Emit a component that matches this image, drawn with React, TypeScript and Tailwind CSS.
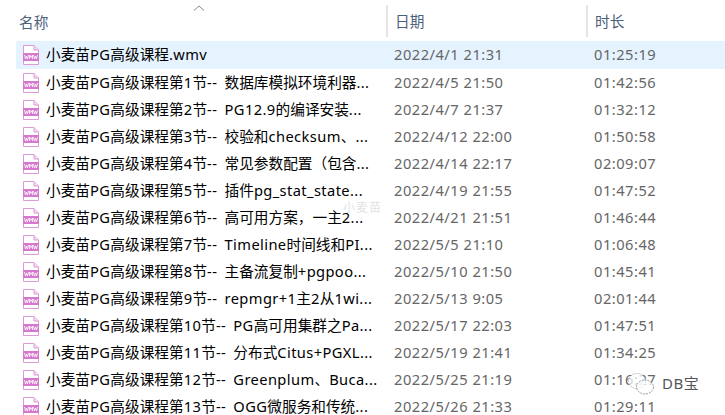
import React from 'react';

const files = [
  { name: '小麦苗PG高级课程.wmv', date: '2022/4/1 21:31', time: '01:25:19' },
  { name: '小麦苗PG高级课程第1节-- 数据库模拟环境利器...', date: '2022/4/5 21:50', time: '01:42:56' },
  { name: '小麦苗PG高级课程第2节-- PG12.9的编译安装...', date: '2022/4/7 21:37', time: '01:32:12' },
  { name: '小麦苗PG高级课程第3节-- 校验和checksum、...', date: '2022/4/12 22:00', time: '01:50:58' },
  { name: '小麦苗PG高级课程第4节-- 常见参数配置（包含...', date: '2022/4/14 22:17', time: '02:09:07' },
  { name: '小麦苗PG高级课程第5节-- 插件pg_stat_state...', date: '2022/4/19 21:55', time: '01:47:52' },
  { name: '小麦苗PG高级课程第6节-- 高可用方案，一主2...', date: '2022/4/21 21:51', time: '01:46:44' },
  { name: '小麦苗PG高级课程第7节-- Timeline时间线和PI...', date: '2022/5/5 21:10', time: '01:06:48' },
  { name: '小麦苗PG高级课程第8节-- 主备流复制+pgpoo...', date: '2022/5/10 21:50', time: '01:45:41' },
  { name: '小麦苗PG高级课程第9节-- repmgr+1主2从1wi...', date: '2022/5/13 9:05', time: '02:01:44' },
  { name: '小麦苗PG高级课程第10节-- PG高可用集群之Pa...', date: '2022/5/17 22:03', time: '01:47:51' },
  { name: '小麦苗PG高级课程第11节-- 分布式Citus+PGXL...', date: '2022/5/19 21:41', time: '01:34:25' },
  { name: '小麦苗PG高级课程第12节-- Greenplum、Buca...', date: '2022/5/25 21:19', time: '01:16:27' },
  { name: '小麦苗PG高级课程第13节-- OGG微服务和传统...', date: '2022/5/26 21:33', time: '01:29:11' },
];

// latin runs sit wider than the CJK ones in the reference
function MixedText({ text }: { text: string }) {
  const parts = text.match(/[\x20-\x7e]+|[^\x20-\x7e]+/g) ?? [];
  return (
    <span className="whitespace-pre [word-spacing:3px]">
      {parts.map((part, i) =>
        /^[\x20-\x7e]/.test(part) ? (
          <span key={i} className="tracking-[0.4px]">{part}</span>
        ) : (
          <span key={i}>{part}</span>
        )
      )}
    </span>
  );
}

function WmvIcon() {
  return (
    <svg width="18" height="20" viewBox="0 0 18 20" className="shrink-0">
      <path d="M1.500 .5H12L16.500 5V19.500H1.500Z" fill="#fff" stroke="#dc9ad6" />
      <path d="M12 .5V5H16.500" fill="#f3dcf1" stroke="#dc9ad6" />
      <rect x="1" y="8" width="16" height="8" fill="#d678ce" />
      <path d="M2.500 10l1 4 1-3 1 3 1-4M7.500 14v-4l1.500 2.500 1.500-2.500v4M11.500 10l1 4 1-3 1 3 1-4" fill="none" stroke="#fff" strokeWidth=".8" />
    </svg>
  );
}

export default function App() {
  return (
    <div className="relative h-[415px] w-[725px] overflow-hidden bg-white font-['Noto_Sans','Noto_Sans_CJK_SC',sans-serif] text-[14.67px]">
      <div className="relative flex h-[37px] pl-[19px] text-[#4c607a]">
        <svg width="12" height="6" viewBox="0 0 12 6" className="absolute left-[193px] top-[5px]">
          <path d="M1 5.500 6 1l5 4.500" fill="none" stroke="#8a8a8a" />
        </svg>
        <div className="flex h-[37px] w-[367px] items-center pt-[6px]">名称</div>
        <div className="flex h-[32px] w-[200px] items-center self-end border-l-2 border-[#e5e5e5] pl-[7px]">日期</div>
        <div className="flex h-[32px] items-center self-end border-l-2 border-[#e5e5e5] pl-[7px]">时长</div>
      </div>
      <div className="pl-[16px] pt-[4px]">
        {files.map((file, i) => (
          <div key={file.name} className={`flex items-center ${i === 0 ? 'h-[28px] bg-[#e5f3ff]' : 'h-[27px]'}`}>
            <div className="flex w-[378px] items-center gap-[6px] pl-[6px] text-black">
              <WmvIcon />
              <span className="pb-[2px]"><MixedText text={file.name} /></span>
            </div>
            <div className="w-[200px] pb-[2px] tracking-[0.5px] text-[#666]">{file.date}</div>
            <div className="pb-[2px] tracking-[0.5px] text-[#666]">{file.time}</div>
          </div>
        ))}
      </div>
      {/* watermarks */}
      <div className="absolute left-[343px] top-[202px] text-[12px] leading-none tracking-[1px] text-[#e2e2e2]">小麦苗</div>
      <div className="absolute left-[627px] top-[372px] flex items-center gap-[7px] text-[15px] tracking-[0.5px] text-[#555]">
        <svg width="28" height="23" viewBox="0 0 28 23">
          <ellipse cx="10" cy="9" rx="8.500" ry="7.500" fill="#fff" fillOpacity=".7" stroke="#bbb" strokeDasharray="2 1" />
          <ellipse cx="18" cy="15" rx="8.500" ry="7" fill="#fff" fillOpacity=".7" stroke="#999" strokeDasharray="2 1" />
        </svg>
        DB宝
      </div>
    </div>
  );
}
